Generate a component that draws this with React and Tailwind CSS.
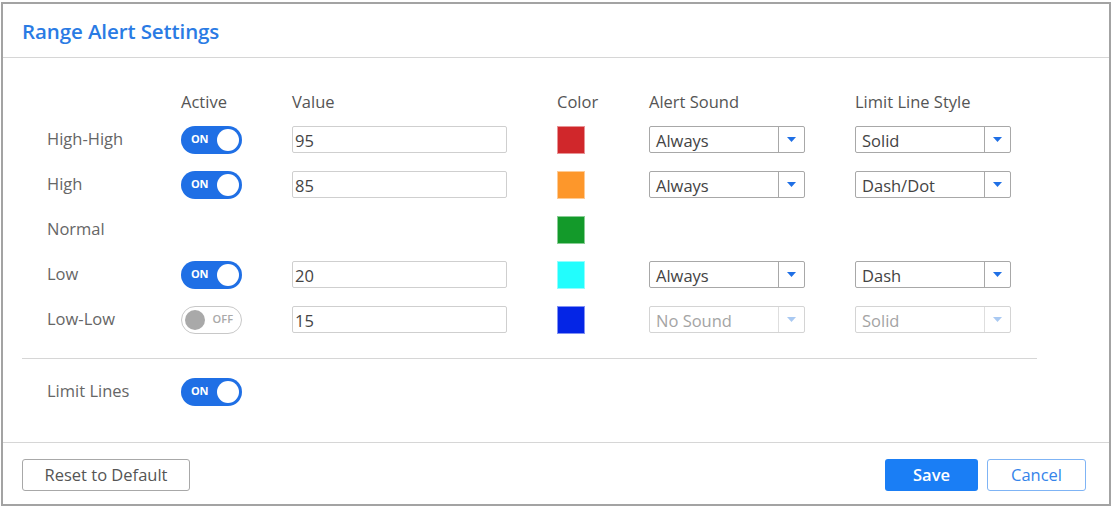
import React from 'react';

const ROWS = [
    { label: 'High-High', active: true, value: '95', color: '#d0272b', sound: 'Always', style: 'Solid' },
    { label: 'High', active: true, value: '85', color: '#fd972b', sound: 'Always', style: 'Dash/Dot' },
    { label: 'Normal', color: '#139a2a' },
    { label: 'Low', active: true, value: '20', color: '#22fdfd', sound: 'Always', style: 'Dash' },
    { label: 'Low-Low', active: false, value: '15', color: '#0425e6', sound: 'No Sound', style: 'Solid' },
];

function Toggle({ on }) {
    if (on) {
        return (
            <div className="w-[61px] h-[28px] rounded-full bg-[#1f6fe5] flex items-center justify-between pl-[10px] pr-[3px]">
                <span className="text-[11px] font-bold text-white tracking-tight">ON</span>
                <span className="w-[22px] h-[22px] rounded-full bg-white" />
            </div>
        );
    }
    return (
        <div className="w-[61px] h-[28px] rounded-full bg-white border border-[#c8c8c8] flex items-center justify-between pl-[3px] pr-[8px]">
            <span className="w-[20px] h-[20px] rounded-full bg-[#a9a9a9]" />
            <span className="text-[11px] font-semibold text-[#a9a9a9]">OFF</span>
        </div>
    );
}

function Select({ value, disabled }) {
    return (
        <div
            className={`w-[156px] h-[27px] flex border rounded-[2px] bg-white ${
                disabled ? 'border-[#d4d4d4] text-[#a4a4a4]' : 'border-[#a8a8a8] text-[#444]'
            }`}
        >
            <div className="flex-1 flex items-center pl-[6px] leading-none pt-[3px]">{value}</div>
            <div className={`w-[26px] flex items-center justify-center border-l ${disabled ? 'border-[#dedede]' : 'border-[#a8a8a8]'}`}>
                <svg width="9" height="5" viewBox="0 0 9 5">
                    <path d="M0 0 H9 L4.5 5 Z" fill={disabled ? '#a9c9f2' : '#1f6fe5'} />
                </svg>
            </div>
        </div>
    );
}

export default function App() {
    return (
        <div className="w-[1112px] h-[508px] bg-white pl-[1px] pt-[2px] pr-[1px] pb-[2px]" style={{ fontFamily: '"Open Sans", "Noto Sans", sans-serif' }}>
            <div className="w-full h-full border-2 border-[#a3a3a3] flex flex-col">
                {/* Header */}
                <div className="h-[54px] shrink-0 flex items-center pl-[19px] pt-[1px] border-b border-[#d6d6d6]">
                    <h1 className="text-[20.5px] font-semibold text-[#2a7be4] tracking-[-0.1px]">Range Alert Settings</h1>
                </div>

                {/* Body */}
                <div className="flex-1 pt-[33px] px-[19px] text-[16.5px] text-[#666]">
                    <div className="grid grid-cols-[134px_111px_265px_92px_206px_1fr] pl-[25px] text-[#555]">
                        <div className="h-[22px]" />
                        <div className="h-[22px] flex items-center">Active</div>
                        <div className="h-[22px] flex items-center">Value</div>
                        <div className="h-[22px] flex items-center">Color</div>
                        <div className="h-[22px] flex items-center">Alert Sound</div>
                        <div className="h-[22px] flex items-center">Limit Line Style</div>
                    </div>
                    <div className="mt-[4px]">
                        {ROWS.map((r) => (
                            <div key={r.label} className="grid grid-cols-[134px_111px_265px_92px_206px_1fr] pl-[25px] h-[45px] items-center">
                                <div className="text-[#666]">{r.label}</div>
                                <div>{r.active !== undefined && <Toggle on={r.active} />}</div>
                                <div>
                                    {r.value && (
                                        <div className="w-[215px] h-[27px] border border-[#cfcfcf] rounded-[2px] flex items-center pl-[2px] pt-[3px] text-[#444]">
                                            {r.value}
                                        </div>
                                    )}
                                </div>
                                <div>
                                    <div className="w-[28px] h-[28px] border border-white/50" style={{ backgroundColor: r.color }} />
                                </div>
                                <div>{r.sound && <Select value={r.sound} disabled={!r.active} />}</div>
                                <div>{r.style && <Select value={r.style} disabled={!r.active} />}</div>
                            </div>
                        ))}
                    </div>
                    <div className="mt-[16px] mr-[53px] border-t border-[#d6d6d6]" />
                    <div className="grid grid-cols-[134px_1fr] pl-[25px] h-[45px] items-center mt-[10px]">
                        <div className="text-[#666]">Limit Lines</div>
                        <div>
                            <Toggle on />
                        </div>
                    </div>
                </div>

                {/* Footer */}
                <div className="h-[62px] shrink-0 border-t border-[#d6d6d6] flex items-start justify-between px-[19px] pt-[16px]">
                    <button className="w-[168px] h-[32px] border border-[#a8a8a8] rounded-[3px] text-[16.5px] text-[#555] bg-white">
                        Reset to Default
                    </button>
                    <div className="flex gap-[9px] pr-[4px]">
                        <button className="w-[93px] h-[32px] rounded-[3px] bg-[#1a7ef5] text-white text-[16.5px] font-semibold">Save</button>
                        <button className="w-[99px] h-[32px] rounded-[3px] border border-[#7fb4f5] text-[#3584ea] text-[16.5px] bg-white">
                            Cancel
                        </button>
                    </div>
                </div>
            </div>
        </div>
    );
}
